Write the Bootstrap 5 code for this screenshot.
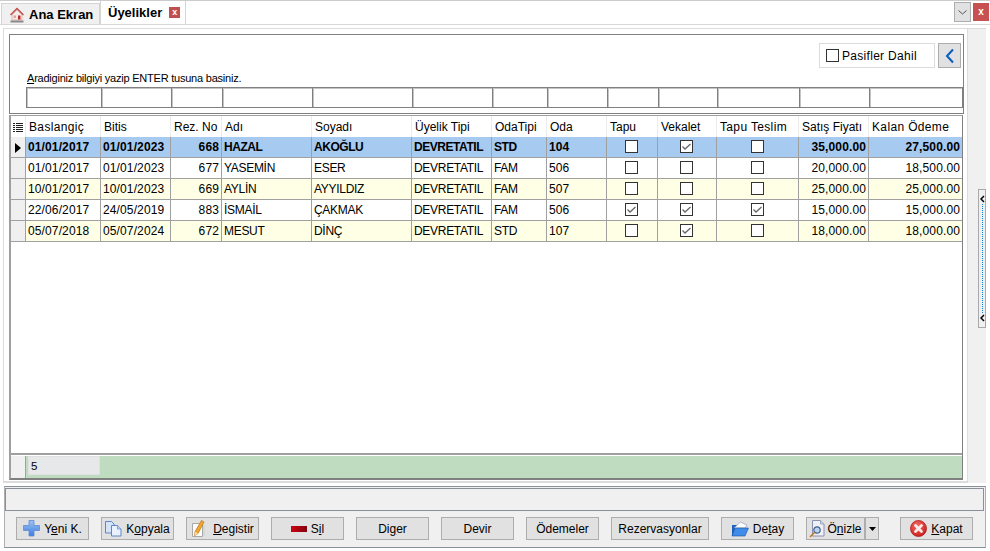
<!DOCTYPE html>
<html lang="tr">
<head>
<meta charset="utf-8">
<title>Üyelikler</title>
<link href="https://cdn.jsdelivr.net/npm/bootstrap@5.3.0/dist/css/bootstrap.min.css" rel="stylesheet">
<style>
html,body{height:551px;overflow:hidden}
body{margin:0;background:#fff;font-family:"Liberation Sans",Arial,sans-serif;font-size:12px;color:#000;width:990px}
.frame-top{border-top:1px solid #ccc;height:25px;border-bottom:1px solid #d8d8d8}
.tab-a,.tab-b{display:flex;align-items:center;font-weight:700}
.tab-a{width:99px;height:21px;margin:2px 0 0 1px;background:#f0f0f0;border:1px solid #d4d4d4;border-bottom:0;font-size:13px;padding-left:7px;gap:4px;padding-top:1px}
.tab-b{width:86px;height:23px;background:#fff;border-right:1px solid #d4d4d4;border-left:1px solid #d4d4d4;font-size:13px;padding-left:7px;gap:7px;padding-bottom:0}
.x-red{width:11px;height:11px;background:#c05050;color:#fff;font-size:9px;line-height:10px;text-align:center}
.win-drop{width:17px;height:20px;margin-top:1px;background:#e1e1e1;border:1px solid #adadad}
.win-close{width:16px;height:18px;margin:2px 1px 0 2px;background:#c75050;color:#fff;font-size:10px;line-height:17px;text-align:center;font-weight:700}
.stage{height:458px;padding-top:3px}
.left-pane{width:965px;margin-left:3px;border:1px solid #dcdcdc;border-bottom-width:2px;padding:5px 4px 5px 5px;border-right:1px solid #dcdcdc}
.right-strip{width:18px;background:#f0f0f0;border-top:1px solid #dcdcdc;padding:160px 0 0 10px;height:455px}
.splitter{width:8px;height:139px;background:#f0f0f0;border:1px solid #a8a8a8;display:flex;flex-direction:column;justify-content:space-between;align-items:center;padding:5px 0}
.splitter i{flex-grow:1;border-left:1px dotted #0a84e0;margin:1px 0}
.search-box{width:955px;height:80px;border:1px solid #808080;padding:8px 0 0 16px}
.pasif{width:116px;height:25px;border:1px solid #dcdcdc;padding-left:6px;gap:3px;font-size:12px;letter-spacing:.3px}
.back-btn{width:23px;height:25px;margin:0 2px 0 3px;background:#e1e1e1;border:1px solid #adadad}
.hint{font-size:11px;line-height:12px;margin:4px 0 3px 1px;letter-spacing:-.22px}
.filter-row{height:21px}
.filter-row div{flex:none;border:1px solid #808080;border-right:0;height:21px;background:#fff;box-shadow:inset 1px 1px 0 #c4c4c4}
.filter-row div:last-child{border-right:1px solid #808080}
.f15c{width:15px}.f93c{width:93px}
.f75{width:75px}.f70{width:70px}.f51{width:51px}.f90{width:90px}.f100{width:100px}.f80{width:80px}.f55{width:55px}.f60{width:60px}.f59{width:59px}.f82{width:82px}.f94{width:94px}
.grid-box{width:954px;height:365px;margin-top:1px;border-style:solid;border-width:1px 1px 2px 2px;border-color:#a0a0a0 #808080 #808080 #a0a0a0}
.grid-body{height:339px;border-bottom:2px solid #a0a0a0;overflow:hidden}
.table.uye{width:951px;table-layout:fixed;border-collapse:separate;border-spacing:0;margin:0;--bs-table-bg:transparent;color:#000}
.table.uye th,.table.uye td{height:21px;line-height:20px;font-size:12px;font-weight:400;border:0;border-right:1px solid #a0a0a0;border-bottom:1px solid #a0a0a0;white-space:nowrap;overflow:hidden;box-shadow:none;background:transparent;color:#000;vertical-align:middle}
.table.uye td{padding:0 2px}
.table.uye th{padding:0 3px;border-right-color:#ececec;border-bottom:0}
.table.uye th:last-child,.table.uye td:last-child{border-right:0}
.table.uye td.ind{background:#f0f0f0;padding:0;text-align:center}
.table.uye th.ind{padding:0;text-align:center}
.table.uye .num{text-align:right}
.table.uye td.ck{text-align:center;padding:0 1px 1px 0}
.table.uye tr.sel td{background:#a6caf0;font-weight:700}
.table.uye tr.sel td.ind{background:#f0f0f0}
.table.uye tr.alt td{background:#ffffe6}
.table.uye tr.alt td.ind{background:#f0f0f0}
.table.uye td.cap{letter-spacing:-.3px}
.table.uye tr.sel td.cap{letter-spacing:-.45px}
.table.uye td.dt{letter-spacing:.12px}
.table.uye th.wd{letter-spacing:.35px}
.table.uye .form-check-input{display:block;margin:0 auto;width:13px;height:13px;border:1px solid #333;border-radius:0;background-color:#fff;box-shadow:none;float:none}
.table.uye .form-check-input:checked{background-color:#fff;border-color:#333;background-size:11px 11px;background-position:center;background-repeat:no-repeat;background-image:url("data:image/svg+xml,%3Csvg xmlns='http://www.w3.org/2000/svg' viewBox='0 0 11 11'%3E%3Cpath d='M1.500 5.500l2.500 2.500 5.500-5' fill='none' stroke='%23666' stroke-width='1.300'/%3E%3C/svg%3E")}
.grid-foot{height:23px;background:#c0dcc0;border-top:1px solid #fff}
.foot-ind{width:15px;background:#f0f0f0;border-right:1px solid #a0a0a0;margin-right:2px}
.foot-cnt{width:72px;height:19px;background:#e6e8ea;border:1px solid #e0e0e0;padding-left:2px;line-height:18px;font-size:11.5px}
.bottom-panel{width:982px;height:62px;margin:3px 0 0 4px;background:#f0f0f0;border:1px solid;padding:1px 1px 0 0;border-color:#8a909a #b0b0b0 #8a909a #b0b0b0}
.status-line{height:23px;border:1px solid #8a909a;background:#f0f0f0}
.btn-line{padding:6px 0 0 11px;gap:12px}
.btn.cmd{width:73px;height:23px;padding:0;border-radius:0;background:#e1e1e1;border:1px solid #adadad;color:#000;font-size:12px;line-height:20px;display:flex;align-items:center;justify-content:center;gap:4px;white-space:nowrap}
.btn.cmd.wide{width:98px}
.btn.cmd.prev{width:60px;border-right-width:2px;gap:2px;flex:none}
.btn-group>.btn.cmd.caret{width:13px;border-left:0;flex:none;margin-left:0}
.kapat-gap{margin-left:9px}
</style>
</head>
<body>
<div class="frame-top d-flex">
  <div class="tab-a">
    <svg width="16" height="16" viewBox="0 0 16 16"><path d="M1.500 8 8 1.500 14.500 8" fill="none" stroke="#c0504d" stroke-width="1.500"/><path d="M3 8 8 3l5 5v5H3z" fill="#f6ebe6" stroke="#c89a90" stroke-width=".6"/><rect x="9" y="8.500" width="2.500" height="4" fill="#c02828"/><rect x="4.500" y="8.500" width="2.500" height="2.500" fill="#d9a8a0"/><path d="M1.500 14.500h13" stroke="#8a8a8a" stroke-width="2"/></svg>
    <span>Ana Ekran</span>
  </div>
  <div class="tab-b"><span>Üyelikler</span><span class="x-red">x</span></div>
  <div class="ms-auto d-flex">
    <div class="win-drop d-flex align-items-center justify-content-center"><svg width="9" height="5" viewBox="0 0 9 5"><path d="M.5.500 4.500 4 8.500.5" fill="none" stroke="#555"/></svg></div>
    <div class="win-close">x</div>
  </div>
</div>
<div class="stage d-flex">
  <div class="left-pane">
    <div class="search-box">
      <div class="d-flex justify-content-end">
        <label class="pasif d-flex align-items-center"><svg width="13" height="13" viewBox="0 0 13 13"><rect x=".5" y=".5" width="12" height="12" fill="#fff" stroke="#333"/></svg><span>Pasifler Dahil</span></label>
        <div class="back-btn d-flex align-items-center justify-content-center"><svg width="10" height="16" viewBox="0 0 10 16"><path d="M8 1.500 2 8l6 6.500" fill="none" stroke="#0a5cc0" stroke-width="2"/></svg></div>
      </div>
      <div class="hint"><u>A</u>radiginiz bilgiyi yazip ENTER tusuna basiniz.</div>
      <div class="filter-row d-flex">
        <div class="f75"></div><div class="f70"></div><div class="f51"></div><div class="f90"></div><div class="f100"></div><div class="f80"></div><div class="f55"></div><div class="f60"></div><div class="f51"></div><div class="f59"></div><div class="f82"></div><div class="f70"></div><div class="f94"></div>
      </div>
    </div>
    <div class="grid-box">
      <div class="grid-body">
        <table class="table uye">
          <colgroup><col class="f15c"><col class="f75"><col class="f70"><col class="f51"><col class="f90"><col class="f100"><col class="f80"><col class="f55"><col class="f60"><col class="f51"><col class="f59"><col class="f82"><col class="f70"><col class="f93c"></colgroup>
          <thead><tr>
            <th class="ind"><svg width="10" height="9" viewBox="0 0 10 9"><path d="M0 .5h2M3 .5h7M0 2.500h2M3 2.500h7M0 4.500h2M3 4.500h7M0 6.500h2M3 6.500h7M0 8.500h2M3 8.500h7" stroke="#222"/></svg></th>
            <th class="wd">Baslangiç</th><th>Bitis</th><th>Rez. No</th><th>Adı</th><th>Soyadı</th><th>Üyelik Tipi</th><th>OdaTipi</th><th>Oda</th><th>Tapu</th><th>Vekalet</th><th class="wd">Tapu Teslim</th><th>Satış Fiyatı</th><th class="wd">Kalan Ödeme</th>
          </tr></thead>
          <tbody>
            <tr class="sel">
              <td class="ind"><svg width="6" height="10" viewBox="0 0 6 10"><path d="M0 0l6 5-6 5z" fill="#000"/></svg></td>
              <td class="dt">01/01/2017</td><td class="dt">01/01/2023</td><td class="num dt">668</td><td class="cap">HAZAL</td><td class="cap">AKOĞLU</td><td class="cap">DEVRETATIL</td><td class="cap">STD</td><td class="dt">104</td>
              <td class="ck"><input class="form-check-input" type="checkbox"></td><td class="ck"><input class="form-check-input" type="checkbox" checked></td><td class="ck"><input class="form-check-input" type="checkbox"></td>
              <td class="num dt">35,000.00</td><td class="num dt">27,500.00</td>
            </tr>
            <tr>
              <td class="ind"></td>
              <td class="dt">01/01/2017</td><td class="dt">01/01/2023</td><td class="num dt">677</td><td class="cap">YASEMİN</td><td class="cap">ESER</td><td class="cap">DEVRETATIL</td><td class="cap">FAM</td><td class="dt">506</td>
              <td class="ck"><input class="form-check-input" type="checkbox"></td><td class="ck"><input class="form-check-input" type="checkbox"></td><td class="ck"><input class="form-check-input" type="checkbox"></td>
              <td class="num dt">20,000.00</td><td class="num dt">18,500.00</td>
            </tr>
            <tr class="alt">
              <td class="ind"></td>
              <td class="dt">10/01/2017</td><td class="dt">10/01/2023</td><td class="num dt">669</td><td class="cap">AYLİN</td><td class="cap">AYYILDIZ</td><td class="cap">DEVRETATIL</td><td class="cap">FAM</td><td class="dt">507</td>
              <td class="ck"><input class="form-check-input" type="checkbox"></td><td class="ck"><input class="form-check-input" type="checkbox"></td><td class="ck"><input class="form-check-input" type="checkbox"></td>
              <td class="num dt">25,000.00</td><td class="num dt">25,000.00</td>
            </tr>
            <tr>
              <td class="ind"></td>
              <td class="dt">22/06/2017</td><td class="dt">24/05/2019</td><td class="num dt">883</td><td class="cap">İSMAİL</td><td class="cap">ÇAKMAK</td><td class="cap">DEVRETATIL</td><td class="cap">FAM</td><td class="dt">506</td>
              <td class="ck"><input class="form-check-input" type="checkbox" checked></td><td class="ck"><input class="form-check-input" type="checkbox" checked></td><td class="ck"><input class="form-check-input" type="checkbox" checked></td>
              <td class="num dt">15,000.00</td><td class="num dt">15,000.00</td>
            </tr>
            <tr class="alt">
              <td class="ind"></td>
              <td class="dt">05/07/2018</td><td class="dt">05/07/2024</td><td class="num dt">672</td><td class="cap">MESUT</td><td class="cap">DİNÇ</td><td class="cap">DEVRETATIL</td><td class="cap">STD</td><td class="dt">107</td>
              <td class="ck"><input class="form-check-input" type="checkbox"></td><td class="ck"><input class="form-check-input" type="checkbox" checked></td><td class="ck"><input class="form-check-input" type="checkbox"></td>
              <td class="num dt">18,000.00</td><td class="num dt">18,000.00</td>
            </tr>
          </tbody>
        </table>
      </div>
      <div class="grid-foot d-flex">
        <div class="foot-ind"></div>
        <div class="foot-cnt">5</div>
      </div>
    </div>
  </div>
  <div class="right-strip"><div class="splitter"><svg width="5" height="8" viewBox="0 0 5 8"><path d="M4 1 1 4l3 3" fill="none" stroke="#000" stroke-width="1.500"/></svg><i></i><svg width="5" height="8" viewBox="0 0 5 8"><path d="M4 1 1 4l3 3" fill="none" stroke="#000" stroke-width="1.500"/></svg></div></div>
</div>
<div class="bottom-panel">
  <div class="status-line"></div>
  <div class="btn-line d-flex">
    <button class="btn cmd" type="button"><svg width="17" height="17" viewBox="0 0 17 17"><defs><linearGradient id="pg" x1="0" y1="0" x2="0" y2="1"><stop offset="0" stop-color="#9cc4f4"/><stop offset="1" stop-color="#3f7ce0"/></linearGradient></defs><path d="M6 .5h5v5h5.500v5H11V16H6v-5.500H.5v-5H6z" fill="url(#pg)" stroke="#5a8ad8" stroke-width=".8"/></svg><span>Y<u>e</u>ni K.</span></button>
    <button class="btn cmd" type="button"><svg width="17" height="17" viewBox="0 0 17 17"><path d="M.5 1.500h6l2.500 2.500v9H.5z" fill="#d4e4fa" stroke="#5f86c4"/><path d="M6.500 5.500h6l3.500 3.500v7H6.500z" fill="#e8f1fd" stroke="#5f86c4"/><path d="M12.500 5.500V9H16" fill="#bcd4f4" stroke="#5f86c4" stroke-width=".7"/></svg><span>K<u>o</u>pyala</span></button>
    <button class="btn cmd" type="button"><svg width="18" height="17" viewBox="0 0 18 17"><path d="M1.500 3.500h10v13h-10z" fill="#fcfcfc" stroke="#a8a8a8"/><path d="M12 5h2v11h-2z" fill="#d8d8d8"/><path d="M10.500.5l2.500 1.500L7 13.500l-3.500 2.200.5-4z" fill="#f2a62e" stroke="#b87410" stroke-width=".7"/><path d="M4 11.700l3 1.800-3.500 2.200z" fill="#f4dcb0"/></svg><span><u>D</u>egistir</span></button>
    <button class="btn cmd" type="button"><svg width="16" height="6" viewBox="0 0 16 6"><defs><linearGradient id="rg"><stop offset="0" stop-color="#d00010"/><stop offset="1" stop-color="#800010"/></linearGradient></defs><rect width="16" height="6" fill="url(#rg)"/></svg><span>S<u>i</u>l</span></button>
    <button class="btn cmd" type="button"><span>Di<u>g</u>er</span></button>
    <button class="btn cmd" type="button"><span>Devir</span></button>
    <button class="btn cmd" type="button"><span>Ödemeler</span></button>
    <button class="btn cmd wide" type="button"><span>Rezervasyonlar</span></button>
    <button class="btn cmd" type="button"><svg width="18" height="16" viewBox="0 0 18 16"><path d="M1 4h6l1 2h6v9H1z" fill="#1f62c0"/><path d="M3 7 9.500 1 16 4l-2 3z" fill="#fff" stroke="#7f8fb0" stroke-width=".6"/><path d="M1 15l3-8h13.500L14 15z" fill="#3f8cea" stroke="#1a50a0" stroke-width=".6"/></svg><span>De<u>t</u>ay</span></button>
    <div class="btn-group">
      <button class="btn cmd prev" type="button"><svg width="16" height="18" viewBox="0 0 16 18"><path d="M3.500.5h8l3.500 3.500v12H3.500z" fill="#eef0f8" stroke="#8a90b0"/><path d="M11.500.5V4H15" fill="#d0d8ec" stroke="#8a90b0" stroke-width=".7"/><circle cx="8" cy="10" r="3.200" fill="#bcd4f0" stroke="#45608a" stroke-width="1.200"/><path d="M5.500 12.500 1 17" stroke="#c87820" stroke-width="1.600"/></svg><span>Ö<u>n</u>izle</span></button>
      <button class="btn cmd caret" type="button"><svg width="7" height="4" viewBox="0 0 7 4"><path d="M0 0h7L3.500 4z" fill="#000"/></svg></button>
    </div>
    <button class="btn cmd kapat-gap" type="button"><svg width="17" height="17" viewBox="0 0 17 17"><defs><radialGradient id="kg" cx=".4" cy=".3" r=".8"><stop offset="0" stop-color="#f46a60"/><stop offset="1" stop-color="#c81818"/></radialGradient></defs><circle cx="8.500" cy="8.500" r="8" fill="url(#kg)" stroke="#b01818" stroke-width=".8"/><path d="M5.500 5.500l6 6M11.500 5.500l-6 6" stroke="#fbeaea" stroke-width="2.800" stroke-linecap="round"/></svg><span><u>K</u>apat</span></button>
  </div>
</div>
<script src="https://cdn.jsdelivr.net/npm/bootstrap@5.3.0/dist/js/bootstrap.bundle.min.js"></script>
</body>
</html>
